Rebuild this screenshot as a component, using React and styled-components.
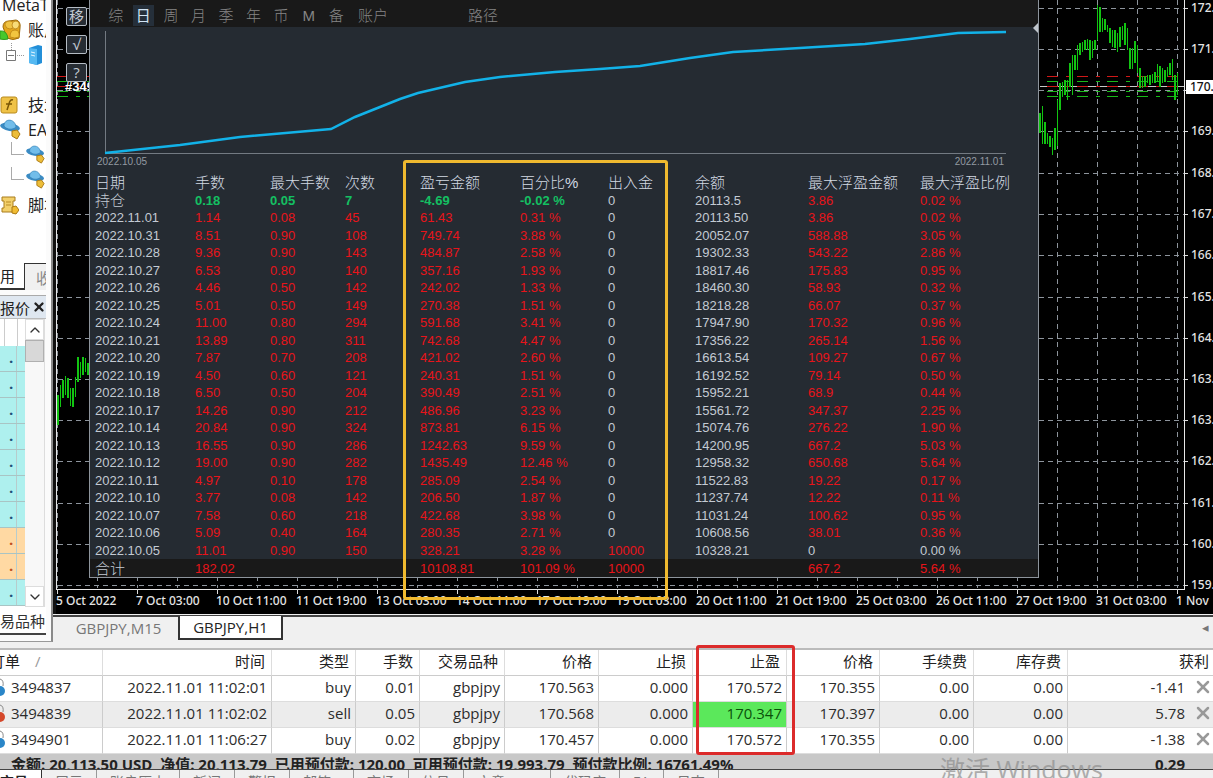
import React from "react";
import styled, { createGlobalStyle } from "styled-components";
import { X, ChevronUp, ChevronDown } from "lucide-react";

const GlobalStyle = createGlobalStyle`
* { box-sizing: border-box; }
body {
margin: 0;
background-color: #f0f0f0;
font-family: "Open Sans", "Noto Sans CJK SC", sans-serif;
font-size: 15px;
color: #333;
}
button { font-family: inherit; padding: 0; border: 0; background: none; color: inherit; }
`;

const gridX = Array.from({ length: 29 }, (_, i) => 57 + i * 40);
const priceLevels = [
    ["172.", 8], ["171.", 49], ["", 90], ["169.", 131], ["168.", 173], ["167.", 214], ["166.", 255], ["165.", 297],
    ["164.", 338], ["163.", 379], ["163.", 420], ["162.", 461], ["161.", 503], ["160.", 544], ["159.", 585],
];
const times = [
    "5 Oct 2022", "7 Oct 03:00", "10 Oct 11:00", "11 Oct 19:00", "13 Oct 03:00", "14 Oct 11:00", "17 Oct 19:00", "19 Oct 03:00",
    "20 Oct 11:00", "21 Oct 19:00", "25 Oct 03:00", "26 Oct 11:00", "27 Oct 19:00", "31 Oct 03:00", "1 Nov",
];
// high and low of each bar
const rightBars = [
    [113, 133], [106, 144], [122, 144], [133, 144], [136, 147], [138, 155], [128, 150], [100, 146], [83, 110], [82, 97],
    [80, 95], [80, 100], [63, 87], [55, 95], [55, 70], [45, 70], [43, 55], [42, 52], [40, 50], [39, 50],
    [40, 60], [41, 58], [40, 50], [5, 40], [7, 32], [18, 32], [19, 30], [25, 32], [28, 43], [30, 47],
    [30, 48], [33, 52], [27, 47], [26, 40], [23, 45], [28, 50], [48, 69], [48, 69], [41, 63], [45, 73],
    [68, 88], [76, 88], [76, 87], [75, 83], [75, 85], [74, 83], [72, 83], [64, 82], [66, 87], [68, 83],
    [70, 82], [67, 77], [63, 75], [59, 80], [75, 100], [73, 95],
];
const leftBars = [
    [395, 425], [385, 407], [380, 398], [376, 395], [378, 398], [388, 406], [388, 407], [377, 397], [357, 382],
    [362, 378], [357, 375], [358, 372], [363, 375],
];

const periods = ["综", "日", "周", "月", "季", "年", "币", "M", "备"];
const statHead = ["日期", "手数", "最大手数", "次数", "盈亏金额", "百分比%", "出入金", "余额", "最大浮盈金额", "最大浮盈比例"];
const stats = [
    ["持仓", "0.18", "0.05", "7", "-4.69", "-0.02 %", "0", "20113.5", "3.86", "0.02 %"],
    ["2022.11.01", "1.14", "0.08", "45", "61.43", "0.31 %", "0", "20113.50", "3.86", "0.02 %"],
    ["2022.10.31", "8.51", "0.90", "108", "749.74", "3.88 %", "0", "20052.07", "588.88", "3.05 %"],
    ["2022.10.28", "9.36", "0.90", "143", "484.87", "2.58 %", "0", "19302.33", "543.22", "2.86 %"],
    ["2022.10.27", "6.53", "0.80", "140", "357.16", "1.93 %", "0", "18817.46", "175.83", "0.95 %"],
    ["2022.10.26", "4.46", "0.50", "142", "242.02", "1.33 %", "0", "18460.30", "58.93", "0.32 %"],
    ["2022.10.25", "5.01", "0.50", "149", "270.38", "1.51 %", "0", "18218.28", "66.07", "0.37 %"],
    ["2022.10.24", "11.00", "0.80", "294", "591.68", "3.41 %", "0", "17947.90", "170.32", "0.96 %"],
    ["2022.10.21", "13.89", "0.80", "311", "742.68", "4.47 %", "0", "17356.22", "265.14", "1.56 %"],
    ["2022.10.20", "7.87", "0.70", "208", "421.02", "2.60 %", "0", "16613.54", "109.27", "0.67 %"],
    ["2022.10.19", "4.50", "0.60", "121", "240.31", "1.51 %", "0", "16192.52", "79.14", "0.50 %"],
    ["2022.10.18", "6.50", "0.50", "204", "390.49", "2.51 %", "0", "15952.21", "68.9", "0.44 %"],
    ["2022.10.17", "14.26", "0.90", "212", "486.96", "3.23 %", "0", "15561.72", "347.37", "2.25 %"],
    ["2022.10.14", "20.84", "0.90", "324", "873.81", "6.15 %", "0", "15074.76", "276.22", "1.90 %"],
    ["2022.10.13", "16.55", "0.90", "286", "1242.63", "9.59 %", "0", "14200.95", "667.2", "5.03 %"],
    ["2022.10.12", "19.00", "0.90", "282", "1435.49", "12.46 %", "0", "12958.32", "650.68", "5.64 %"],
    ["2022.10.11", "4.97", "0.10", "178", "285.09", "2.54 %", "0", "11522.83", "19.22", "0.17 %"],
    ["2022.10.10", "3.77", "0.08", "142", "206.50", "1.87 %", "0", "11237.74", "12.22", "0.11 %"],
    ["2022.10.07", "7.58", "0.60", "218", "422.68", "3.98 %", "0", "11031.24", "100.62", "0.95 %"],
    ["2022.10.06", "5.09", "0.40", "164", "280.35", "2.71 %", "0", "10608.56", "38.01", "0.36 %"],
    ["2022.10.05", "11.01", "0.90", "150", "328.21", "3.28 %", "10000", "10328.21", "0", "0.00 %"],
];
const total = ["合计", "182.02", "", "", "10108.81", "101.09 %", "10000", "", "667.2", "5.64 %"];

const orderHead = ["时间", "类型", "手数", "交易品种", "价格", "止损", "止盈", "价格", "手续费", "库存费"];
const orders = [
    { id: "3494837", side: "#2a86c8", cells: ["2022.11.01 11:02:01", "buy", "0.01", "gbpjpy", "170.563", "0.000", "170.572", "170.355", "0.00", "0.00"], profit: "-1.41" },
    { id: "3494839", side: "#d4472a", cells: ["2022.11.01 11:02:02", "sell", "0.05", "gbpjpy", "170.568", "0.000", "170.347", "170.397", "0.00", "0.00"], profit: "5.78", hit: 6 },
    { id: "3494901", side: "#2a86c8", cells: ["2022.11.01 11:06:27", "buy", "0.02", "gbpjpy", "170.457", "0.000", "170.572", "170.355", "0.00", "0.00"], profit: "-1.38" },
];
const orderCols = [103, 169, 84, 64, 85, 94, 94, 94, 93, 94, 94];
const quotes = [0, 0, 0, 0, 0, 0, 0, 1, 1, 0];
const bottomTabs = [["展示"], ["账户历史"], ["新闻"], ["警报"], ["邮箱", 9], ["市场"], ["信号"], ["文章", 32], ["代码库"], ["EA"], ["日志"]];

function statColor(row, col) {
    const value = stats[row][col];
    if (col === 0 || col === 7) return "#c3cad3";
    if (row === 0 && col > 0 && col < 6) return "#14c062";
    if (value === "0" || value === "0.00 %") return "#c3cad3";
    return "#e8141a";
}

const AccountsIcon = () => (
    <svg width="21" height="22" viewBox="0 0 21 22">
        <path d="M3 8q0-6 6-6l7-1q5 1 4 8l-1 10q-6 3-12 0z" fill="#e3a61c" stroke="#9b6a0c" />
        <path d="M5 6q0-4 5-4 4 0 4 4t-4 4-5-4z" fill="#f0c445" stroke="#b98215" strokeWidth=".8" />
        <path d="M12 6q0-4 4-4 4 1 3 5-1 3-4 3-3-1-3-4z" fill="#f8dc78" stroke="#b98215" strokeWidth=".8" />
        <path d="M10 18q0-7 5-7 5 0 4 7-4 2-9 0z" fill="#f2c540" stroke="#b98215" strokeWidth=".8" />
        <path d="M0 12q7-1 8 8-4 1-8 0z" fill="#46c82c" stroke="#2f9a1c" />
    </svg>
);

const ServerIcon = () => (
    <svg width="42" height="24" viewBox="0 0 42 24">
        <path d="M11.500 0v7M17 12.500h8" stroke="#999" strokeDasharray="1 1" fill="none" />
        <path d="M6.500 7.500h9v10h-9zM8 12.500h6" fill="#fff" stroke="#777" />
        <path d="M29 5l9-3 4 1v17l-5 2-8-2z" fill="#238fd8" />
        <path d="M29 5l8 1v16l-8-2z" fill="#55b9f2" />
        <path d="M31 9l4 1M31 12l4 1" stroke="#e5f5ff" />
    </svg>
);

const IndicatorIcon = () => (
    <svg width="19" height="18" viewBox="0 0 19 18">
        <rect x="1" y="1" width="16" height="16" rx="2" fill="#efc247" stroke="#b98a1c" />
        <path d="M13 4q-3-1-4 4l-2 6M6 8h6" stroke="#7a5606" fill="none" strokeWidth="1.500" />
    </svg>
);

const HatIcon = ({ size = 21 }) => (
    <svg width={size} height={size} viewBox="0 0 21 21">
        <ellipse cx="10" cy="8" rx="10" ry="4" fill="#3a8bc4" transform="rotate(10 10 8)" />
        <path d="M4 7c0-8 11-8 12 1-3 3-9 3-12-1z" fill="#72bdea" stroke="#2d78ad" strokeWidth=".6" />
        <path d="M12 12l5-1 3 4-3 5-5-3z" fill="#edbd38" stroke="#a97812" />
    </svg>
);

const ScriptIcon = () => (
    <svg width="19" height="20" viewBox="0 0 19 20">
        <path d="M2 2h13v4h-2v7h2v4H2v-4h2V6H2z" fill="#f3d06a" stroke="#a97c1c" />
        <path d="M6 7h5M6 10h5" stroke="#b98b27" />
        <path d="M12 12l4-1 3 4-3 4-4-1z" fill="#f1bc32" stroke="#a97812" />
    </svg>
);

const PriceChart = () => (
    <ChartDrawing>
        <g transform="translate(-53 0)" shapeRendering="crispEdges">
            <path d="M53 0H56V618H53z" fill="#111" />
            {priceLevels.map(([label, y]) => (
                <g key={y}>
                    <path d={`M58 ${y}.5H1184`} stroke="#8d949c" strokeDasharray="5 4" />
                    <path d={`M1184 ${y}.5h4`} stroke="#ddd" />
                    <ChartLabel x="1191" y={y + 4}>{label}</ChartLabel>
                </g>
            ))}
            {gridX.map((x) => <path key={x} d={`M${x}.5 0V588`} stroke="#8d949c" strokeDasharray="5 4" />)}
            <path d="M1040 86.500H1184" stroke="#c7c7c7" />
            <path d="M1047 76.500H1184M1047 86.500H1184M57 76.500H89M57 86.500H89" stroke="#d01818" strokeDasharray="11 8 4 7" />
            <path d="M1047 81.500H1184M1047 91.500H1184M1047 96.500H1184M57 81.500H89M57 91.500H89M57 96.500H89" stroke="#18b818" strokeDasharray="11 8 4 7" />
            {rightBars.map(([top, bottom], i) => (
                <rect key={i} x={Math.round(1039 + i * 2.5)} y={top} width={i % 2 ? 1 : 2} height={bottom - top} fill="#12c412" />
            ))}
            {leftBars.map(([top, bottom], i) => (
                <rect key={i} x={Math.round(57 + i * 2.5)} y={top} width={i % 2 ? 1 : 2} height={bottom - top} fill="#12c412" />
            ))}
            <path d="M56.500 0V589M56 589.500H1184M1184.500 0V590" stroke="#e8e8e8" />
            <rect x="1186" y="80" width="27" height="14" fill="#fff" />
            <ChartLabel x="1190" y="91" $dark>170.</ChartLabel>
            {times.map((label, i) => (
                <g key={label}>
                    <path d={`M${57 + i * 80}.5 589v5`} stroke="#ddd" />
                    <ChartLabel x={56 + i * 80} y="605">{label}</ChartLabel>
                </g>
            ))}
            <OrderTag x="65" y="91">#349</OrderTag>
        </g>
    </ChartDrawing>
);

const Statistics = () => (
    <Panel>
        <PeriodBar>
            <Periods>
                {periods.map((p) => <PeriodButton key={p} $active={p === "日"}>{p}</PeriodButton>)}
            </Periods>
            <WideButton>账户</WideButton>
            <WideButton $gap={64}>路径</WideButton>
        </PeriodBar>
        <Curve viewBox="90 27 948 128" preserveAspectRatio="none">
            <path d="M105.500 31V153.500H1006" stroke="#737a82" fill="none" />
            <path
                d="M105 153L180 145L240 137L331 129L355 117L380 107L400 99L418 93L465 82L500 77L555 72L600 69L640 66L690 58L733 52L800 48L865 44L910 39L958 33L1006 32"
                stroke="#12b2e8" strokeWidth="2.500" fill="none"
            />
            <path d="M1038 23l-5 5 5 5z" fill="#bfc5cc" />
        </Curve>
        <CurveDates>
            <span>2022.10.05</span>
            <span>2022.11.01</span>
        </CurveDates>
        <StatTable>
            <colgroup>
                {[105, 75, 75, 75, 100, 88, 87, 113, 112].map((w, i) => <Col key={i} $w={w} />)}
                <col />
            </colgroup>
            <thead>
                <tr>{statHead.map((h) => <StatHead key={h}>{h}</StatHead>)}</tr>
            </thead>
            <tbody>
                {stats.map((row, r) => (
                    <StatRow key={row[0]}>
                        {row.map((value, c) => (
                            <Stat key={c} $color={statColor(r, c)} $bold={r === 0 && c > 0 && c < 6} $big={r === 0 && c === 0}>{value}</Stat>
                        ))}
                    </StatRow>
                ))}
            </tbody>
            <tfoot>
                <TotalRow>
                    {total.map((value, c) => <Stat key={c} $color={c ? "#e8141a" : "#c3cad3"} $big={c === 0}>{value}</Stat>)}
                </TotalRow>
            </tfoot>
        </StatTable>
    </Panel>
);

const Side = () => (
    <Sidebar>
        <Navigator>
            <NavRow><NavText $root>MetaTrader</NavText></NavRow>
            <NavRow><NavIcon><AccountsIcon /></NavIcon><NavText>账户</NavText></NavRow>
            <NavRow><ServerIcon /></NavRow>
            <NavRow />
            <NavRow><NavIcon><IndicatorIcon /></NavIcon><NavText>技术</NavText></NavRow>
            <NavRow><NavIcon><HatIcon /></NavIcon><NavText>EA</NavText></NavRow>
            <NavRow $branch><HatIcon size={19} /></NavRow>
            <NavRow $branch><HatIcon size={19} /></NavRow>
            <NavRow><NavIcon><ScriptIcon /></NavIcon><NavText>脚本</NavText></NavRow>
        </Navigator>
        <NavTabs>
            <NavTab $active>用</NavTab>
            <NavTab>收</NavTab>
        </NavTabs>
        <QuoteTitle>
            <span>报价</span>
            <button aria-label="关闭报价"><X size={14} strokeWidth={4} /></button>
        </QuoteTitle>
        <Quotes>
            <QuoteList>
                <QuoteHead />
                {quotes.map((warm, i) => <Quote key={i} $warm={warm}>.</Quote>)}
            </QuoteList>
            <Scroll>
                <ScrollButton aria-label="向上"><ChevronUp size={16} /></ScrollButton>
                <Thumb />
                <ScrollButton aria-label="向下"><ChevronDown size={16} /></ScrollButton>
            </Scroll>
        </Quotes>
        <QuoteTab>易品种</QuoteTab>
    </Sidebar>
);

const Terminal = () => (
    <TerminalBox>
        <OrderTable>
            <colgroup>
                {orderCols.map((w, i) => <Col key={i} $w={w} />)}
                <col />
            </colgroup>
            <thead>
                <tr>
                    <OrderHead $left><OrderTitle>订单<Sort>/</Sort></OrderTitle></OrderHead>
                    {orderHead.map((h, i) => <OrderHead key={i}>{h}</OrderHead>)}
                    <OrderHead>获利</OrderHead>
                </tr>
            </thead>
            <tbody>
                {orders.map((o) => (
                    <OrderRow key={o.id}>
                        <OrderCell $left>
                            <OrderId>
                                <svg width="6" height="20" viewBox="0 0 6 20">
                                    <path d="M0 2q4 1 3 7" stroke="#888" fill="none" />
                                    <circle cx="0" cy="14" r="5" fill={o.side} />
                                </svg>
                                {o.id}
                            </OrderId>
                        </OrderCell>
                        {o.cells.map((value, i) => <OrderCell key={i} $hit={o.hit === i}>{value}</OrderCell>)}
                        <OrderCell>
                            <Profit>{o.profit}<button aria-label="平仓"><X size={20} strokeWidth={3} color="#999" /></button></Profit>
                        </OrderCell>
                    </OrderRow>
                ))}
            </tbody>
        </OrderTable>
        <Summary>
            <span>金额: 20,113.50 USD&nbsp; 净值: 20,113.79&nbsp; 已用预付款: 120.00&nbsp; 可用预付款: 19,993.79&nbsp; 预付款比例: 16761.49%</span>
            <span>0.29</span>
        </Summary>
        <BottomTabs>
            <BottomTab $active>交易</BottomTab>
            {bottomTabs.map(([name, badge]) => <BottomTab key={name} $badge={badge}>{name}</BottomTab>)}
        </BottomTabs>
    </TerminalBox>
);

export default function App() {
    return (
        <Page>
            <GlobalStyle />
            <Upper>
                <Side />
                <Main>
                    <Chart>
                        <PriceChart />
                        <ToolButtons>
                            <ToolButton>移</ToolButton>
                            <ToolButton>√</ToolButton>
                            <ToolButton>?</ToolButton>
                        </ToolButtons>
                        <Statistics />
                    </Chart>
                    <ChartTabs>
                        <ChartTab>GBPJPY,M15</ChartTab>
                        <ChartTab $active>GBPJPY,H1</ChartTab>
                        <TabArrow aria-label="上一个">◂</TabArrow>
                    </ChartTabs>
                </Main>
            </Upper>
            <Terminal />
            <YellowMark />
            <RedMark />
            <Watermark>激活 Windows</Watermark>
        </Page>
    );
}

const Page = styled.div`
position: relative;
height: 100vh;
overflow: hidden;
`;

const Upper = styled.div`
display: flex;
`;

const Sidebar = styled.aside`
width: 53px;
height: 642px;
flex: none;
display: flex;
flex-direction: column;
padding-right: 5px;
overflow: hidden;
background-color: #fbfbfb;
border-right: 2px solid #8a8a8a;
border-bottom: 1px solid #999;
`;

const Navigator = styled.ul`
list-style: none;
margin: -8px 0 0;
padding: 0;
height: 271px;
flex: none;
overflow: hidden;
background-color: #fff;
`;

const NavRow = styled.li`
display: flex;
align-items: center;
height: 25px;
overflow: hidden;
padding-left: ${(props) => (props.$branch ? "26px" : "0")};
background: ${(props) => (props.$branch ? "linear-gradient(#aaa, #aaa) 11px 0 / 1px 13px no-repeat, linear-gradient(#aaa, #aaa) 11px 12px / 13px 1px no-repeat" : "none")};
`;

const NavIcon = styled.span`
display: flex;
width: 28px;
flex: none;
`;

const NavText = styled.span`
font-size: 16px;
line-height: 24px;
white-space: nowrap;
padding-left: ${(props) => (props.$root ? "2px" : "0")};
color: #222;
`;

const NavTabs = styled.div`
display: flex;
height: 27px;
flex: none;
`;

const NavTab = styled.button`
width: ${(props) => (props.$active ? "25px" : "21px")};
overflow: hidden;
padding-left: ${(props) => (props.$active ? "0" : "11px")};
text-align: left;
white-space: nowrap;
font-size: 15px;
background-color: ${(props) => (props.$active ? "#fff" : "#f0f0f0")};
border-top: ${(props) => (props.$active ? "0" : "1px solid #333")};
border-right: ${(props) => (props.$active ? "1px solid #333" : "0")};
border-bottom: ${(props) => (props.$active ? "2px solid #333" : "0")};
color: ${(props) => (props.$active ? "#222" : "#888")};
`;

const QuoteTitle = styled.div`
display: flex;
align-items: center;
justify-content: space-between;
height: 24px;
margin-top: 5px;
flex: none;
border-top: 1px solid #aaa;
border-bottom: 1px solid #bbb;
background-color: #dfe7f0;
color: #222;
button { display: flex; }
`;

const Quotes = styled.div`
display: flex;
height: 288px;
flex: none;
`;

const QuoteList = styled.div`
width: 25px;
overflow: hidden;
background: #fff;
`;

const QuoteHead = styled.div`
height: 27px;
background: linear-gradient(#ccc, #ccc) 4px 0 / 1px 100% no-repeat, linear-gradient(#ccc, #ccc) 17px 0 / 1px 100% no-repeat;
`;

const Quote = styled.div`
height: 26px;
padding-left: 9px;
line-height: 22px;
font-weight: bold;
border-bottom: 1px solid #a9c4c4;
background: linear-gradient(#b7cccc, #b7cccc) 16px 0 / 1px 100% no-repeat ${(props) => (props.$warm ? "#ffd9a3" : "#aef0ee")};
color: ${(props) => (props.$warm ? "#c05020" : "#205078")};
`;

const Scroll = styled.div`
display: flex;
flex-direction: column;
width: 20px;
border-right: 1px solid #ddd;
background-color: #f8f8f8;
`;

const ScrollButton = styled.button`
display: flex;
align-items: center;
justify-content: center;
height: 21px;
flex: none;
border: 1px solid #ddd;
background-color: #fff;
`;

const Thumb = styled.div`
height: 22px;
margin-bottom: auto;
background-color: #d8d8d8;
border: 1px solid #b0b0b0;
`;

const QuoteTab = styled.button`
height: 28px;
flex: none;
text-align: left;
white-space: nowrap;
font-size: 15px;
border-bottom: 2px solid #444;
background-color: #fff;
`;

const Main = styled.main`
flex: 1;
min-width: 0;
`;

const Chart = styled.section`
position: relative;
display: flex;
align-items: flex-start;
padding-bottom: 36px;
background-color: #000;
`;

const ChartDrawing = styled.svg`
position: absolute;
top: 0;
left: 0;
width: 100%;
height: 100%;
`;

const ChartLabel = styled.text`
font-family: "Noto Sans", sans-serif;
font-size: 12px;
font-weight: 500;
fill: ${(props) => (props.$dark ? "#111" : "#e4e4e4")};
`;

const OrderTag = styled.text`
font-family: "Liberation Sans", sans-serif;
font-size: 13px;
font-weight: bold;
fill: #fff;
`;

const ToolButtons = styled.div`
position: relative;
display: flex;
flex-direction: column;
gap: 9px;
width: 36px;
padding: 7px 2px 0 13px;
flex: none;
`;

const ToolButton = styled.button`
height: 19px;
border: 1px solid #b5bcc4;
border-radius: 2px;
background-color: #262c33;
color: #c3cad3;
font-size: 15px;
line-height: 15px;
overflow: hidden;
`;

const Panel = styled.div`
position: relative;
flex: 1;
min-width: 0;
margin-right: 174px;
background-color: #252b32;
border: 1px solid #8d949c;
border-top: 0;
font-family: "Liberation Sans", "Noto Sans CJK SC", sans-serif;
`;

const PeriodBar = styled.div`
display: flex;
height: 27px;
padding: 5px 0 0 12px;
background-color: #191919;
`;

const Periods = styled.div`
display: grid;
grid-template-columns: repeat(9, 1fr);
width: 248px;
`;

const PeriodButton = styled.button`
height: 21px;
margin: 0 3px;
font-size: 15px;
line-height: 21px;
font-weight: ${(props) => (props.$active ? "normal" : "300")};
color: ${(props) => (props.$active ? "#d2e4f4" : "#858585")};
background-color: ${(props) => (props.$active ? "#252f3a" : "transparent")};
`;

const WideButton = styled.button`
width: 46px;
height: 21px;
margin-left: ${(props) => props.$gap || 0}px;
font-size: 15px;
line-height: 21px;
font-weight: 300;
color: #858585;
`;

const Curve = styled.svg`
display: block;
width: 100%;
height: 128px;
overflow: visible;
`;

const CurveDates = styled.div`
display: flex;
justify-content: space-between;
height: 18px;
padding: 0 34px 0 7px;
font-size: 10px;
line-height: 13px;
color: #939aa2;
`;

const StatTable = styled.table`
width: 100%;
table-layout: fixed;
border-collapse: collapse;
font-size: 13px;
line-height: 17px;
`;

const Col = styled.col`
width: ${(props) => props.$w}px;
`;

const StatHead = styled.th`
height: 18px;
padding: 0;
text-align: left;
font-size: 15px;
font-weight: 300;
white-space: nowrap;
color: #d3dae3;
&:first-child { padding-left: 5px; }
`;

const StatRow = styled.tr`
height: 17px;
&:nth-child(odd) { height: 18px; }
`;

const TotalRow = styled.tr`
height: 18px;
background-color: #191919;
`;

const Stat = styled.td`
padding: 0;
white-space: nowrap;
font-size: ${(props) => (props.$big ? "15px" : "13px")};
font-weight: ${(props) => (props.$bold ? "bold" : props.$big ? "300" : "normal")};
color: ${(props) => props.$color};
&:first-child { padding-left: 5px; }
`;

const ChartTabs = styled.div`
display: flex;
height: 28px;
margin-top: 1px;
border-top: 2px solid #444;
`;

const ChartTab = styled.button`
width: ${(props) => (props.$active ? "105px" : "125px")};
height: 24px;
margin-top: -1px;
padding-left: ${(props) => (props.$active ? "0" : "6px")};
font-size: 15px;
line-height: 22px;
color: ${(props) => (props.$active ? "#222" : "#777")};
background-color: ${(props) => (props.$active ? "#fff" : "transparent")};
border: ${(props) => (props.$active ? "2px solid #333" : "0")};
border-top: 0;
`;

const TabArrow = styled.button`
margin-left: auto;
padding: 0 4px 6px 0;
color: #777;
`;

const TerminalBox = styled.section`
margin-top: 5px;
border-top: 2px solid #bbb;
background-color: #f0f0f0;
`;

const OrderTable = styled.table`
width: 100%;
table-layout: fixed;
border-collapse: separate;
border-spacing: 0;
background-color: #fff;
font-size: 15px;
line-height: 20px;
`;

const OrderHead = styled.th`
height: 26px;
padding: 0 6px 4px;
text-align: ${(props) => (props.$left ? "left" : "right")};
font-weight: normal;
white-space: nowrap;
color: #222;
border-right: 1px solid #ddd;
border-bottom: 1px solid #ccc;
&:last-child { border-right: 0; padding-right: 4px; }
`;

const OrderTitle = styled.div`
display: flex;
margin-left: -16px;
`;

const Sort = styled.span`
padding-left: 15px;
color: #999;
`;

const OrderRow = styled.tr`
&:nth-child(even) { background-color: #ececec; }
`;

const OrderCell = styled.td`
height: 26px;
padding: 0 4px 4px 0;
text-align: ${(props) => (props.$left ? "left" : "right")};
white-space: nowrap;
border-right: 1px solid #ccc;
border-bottom: 1px solid #ddd;
background-color: ${(props) => (props.$hit ? "#5be85b" : "transparent")};
color: ${(props) => (props.$hit ? "#0a500a" : "#2c2c2c")};
&:last-child { border-right: 0; padding-right: 0; }
`;

const OrderId = styled.div`
display: flex;
align-items: center;
gap: 5px;
`;

const Profit = styled.div`
display: flex;
align-items: center;
justify-content: flex-end;
gap: 8px;
button { display: flex; }
`;

const Summary = styled.div`
display: flex;
justify-content: space-between;
height: 16px;
overflow: hidden;
padding: 0 28px 0 11px;
font-size: 15px;
line-height: 20px;
font-weight: bold;
white-space: nowrap;
color: #222;
background-color: #c8c8c8;
border-bottom: 1px solid #444;
`;

const BottomTabs = styled.nav`
display: flex;
height: 24px;
`;

const BottomTab = styled.button`
padding: 0 ${(props) => 13 + (props.$badge || 0)}px 0 13px;
font-size: 14px;
line-height: 20px;
white-space: nowrap;
color: ${(props) => (props.$active ? "#222" : "#777")};
font-weight: ${(props) => (props.$active ? "bold" : "normal")};
background-color: ${(props) => (props.$active ? "#fff" : "transparent")};
border-right: 1px solid ${(props) => (props.$active ? "#333" : "#999")};
&:first-child { padding-left: 0; }
`;

const YellowMark = styled.div`
position: absolute;
top: 160px;
left: 403px;
width: 265px;
height: 440px;
border: 3px solid #efb92f;
border-radius: 3px;
pointer-events: none;
`;

const RedMark = styled.div`
position: absolute;
top: 645px;
left: 696px;
width: 99px;
height: 110px;
border: 3px solid #dc2b2b;
border-radius: 3px;
pointer-events: none;
`;

const Watermark = styled.div`
position: absolute;
top: 753px;
left: 940px;
font-size: 25px;
line-height: 32px;
white-space: nowrap;
color: #8f8f8f;
opacity: 0.7;
pointer-events: none;
`;
